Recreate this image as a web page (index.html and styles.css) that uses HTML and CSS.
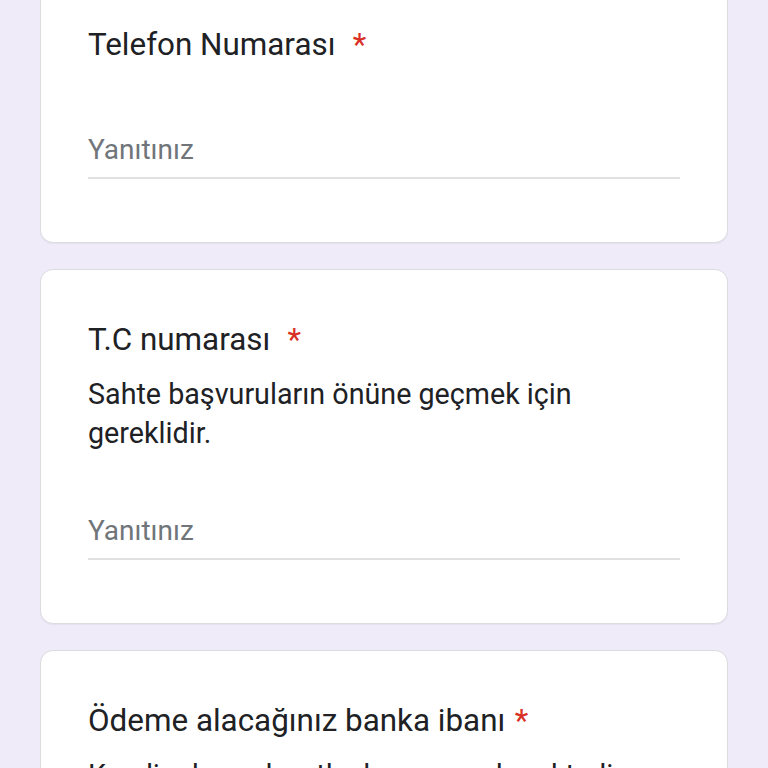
FILE: index.html
```html
<!DOCTYPE html>
<html lang="tr">
<head>
<meta charset="utf-8">
<title>Form</title>
<link rel="stylesheet" href="styles.css">
</head>
<body>
<main class="form">
  <section class="card">
    <div class="title">Telefon Numarası <span class="req">*</span></div>
    <div class="answer">
      <div class="placeholder">Yanıtınız</div>
    </div>
  </section>

  <section class="card">
    <div class="title">T.C numarası <span class="req">*</span></div>
    <div class="desc">Sahte başvuruların önüne geçmek için gereklidir.</div>
    <div class="answer answer--after-desc">
      <div class="placeholder">Yanıtınız</div>
    </div>
  </section>

  <section class="card">
    <div class="title">Ödeme alacağınız banka ibanı<span class="req">*</span></div>
    <div class="desc">Kendi adınıza kayıtlı olması gerekmektedir.</div>
    <div class="answer answer--after-desc">
      <div class="placeholder">Yanıtınız</div>
    </div>
  </section>
</main>
</body>
</html>
```

FILE: styles.css
```css
html, body {
  margin: 0;
  padding: 0;
  height: 100%;
  overflow: hidden;
  background: #f0ebf8;
}

body {
  font-family: Roboto, "Noto Sans", "Liberation Sans", sans-serif;
  color: #202124;
}

.form {
  display: flex;
  flex-direction: column;
  gap: 26px;
  padding: 0 40px;
  margin-top: -26px;
}

.card {
  background: #ffffff;
  border: 1px solid #dadce0;
  border-radius: 13px;
  padding: 50px 47px 63px 47px;
  box-shadow: 0 1px 1px rgba(60, 64, 67, 0.06);
}

.title {
  font-size: 31.4px;
  line-height: 40px;
  font-weight: 400;
  color: #202124;
}

.req {
  color: #d93025;
  padding-left: 0.3em;
}

.desc {
  margin-top: 15px;
  font-size: 28.7px;
  line-height: 39px;
  color: #202124;
}

.answer {
  margin-top: 66px;
  padding-bottom: 8px;
  border-bottom: 2px solid #e0e0e0;
}

.answer--after-desc {
  margin-top: 59px;
}

.placeholder {
  font-size: 28px;
  line-height: 38px;
  color: #70757a;
}
```
